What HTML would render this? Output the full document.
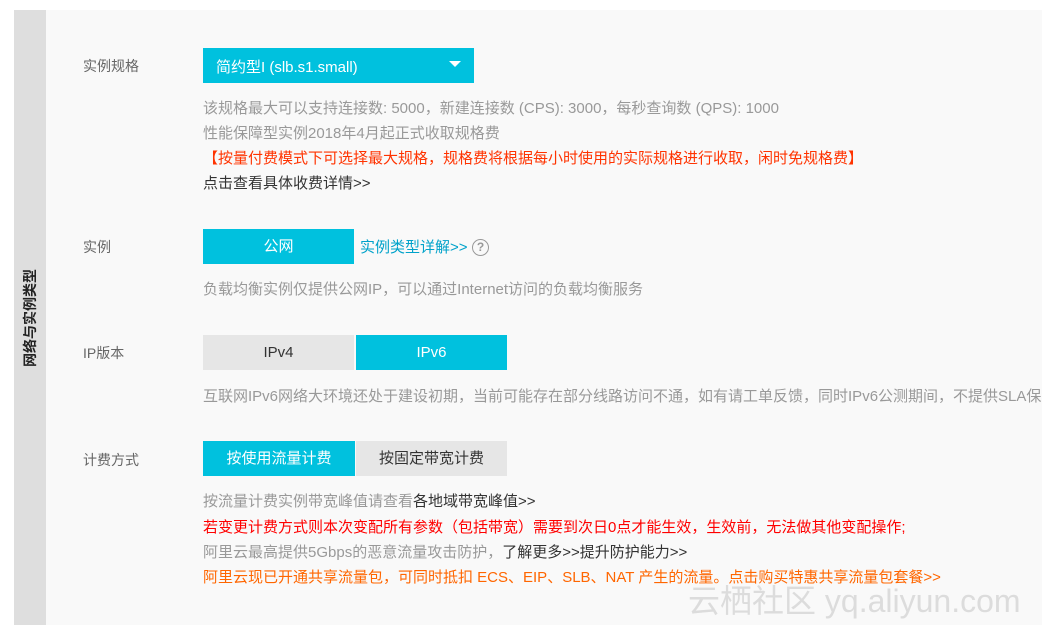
<!DOCTYPE html>
<html><head><meta charset="utf-8"><style>
body{margin:0;width:1042px;height:625px;background:#fff;position:relative;overflow:hidden;font-family:"Liberation Sans","Noto Sans CJK SC",sans-serif;}
.a{position:absolute;white-space:nowrap;}
.side{left:14px;top:10px;width:32px;height:615px;background:#dedede;}
.main{left:46px;top:10px;width:996px;height:615px;background:#f9f9f9;}
.lab{font-size:14px;color:#666;}
.d{font-size:15px;color:#999;}
.r{font-size:15px;color:#f00;}
.o{font-size:15px;color:#f60;}
.k{color:#333;}
.btn{font-size:15px;text-align:center;}
.on{background:#00c1de;color:#fff;}
.off{background:#e6e6e6;color:#333;}
</style></head><body>
<div class="a side"></div>
<div class="a main"></div>
<div class="a" style="left:30px;top:318px;transform:translate(-50%,-50%) rotate(-90deg);font-size:14px;font-weight:bold;color:#222;">网络与实例类型</div>

<div class="a lab" style="left:83px;top:56px;">实例规格</div>
<div class="a on" style="left:203px;top:48px;width:271px;height:35px;"></div>
<div class="a" style="left:216px;top:56px;color:#fff;font-size:15px;">简约型I (slb.s1.small)</div>
<div class="a" style="left:449px;top:61px;width:0;height:0;border-left:6px solid transparent;border-right:6px solid transparent;border-top:6px solid #fff;"></div>
<div class="a d" style="left:203px;top:97px;">该规格最大可以支持连接数: 5000，新建连接数 (CPS): 3000，每秒查询数 (QPS): 1000</div>
<div class="a d" style="left:203px;top:122px;">性能保障型实例2018年4月起正式收取规格费</div>
<div class="a r" style="left:203px;top:147px;color:#f30;">【按量付费模式下可选择最大规格，规格费将根据每小时使用的实际规格进行收取，闲时免规格费】</div>
<div class="a d k" style="left:203px;top:172px;">点击查看具体收费详情&gt;&gt;</div>

<div class="a lab" style="left:83px;top:237px;">实例</div>
<div class="a btn on" style="left:203px;top:229px;width:151px;height:35px;line-height:35px;">公网</div>
<div class="a" style="left:360px;top:236px;font-size:15px;color:#00a2ca;">实例类型详解&gt;&gt;</div>
<div class="a" style="left:472px;top:239px;width:15px;height:15px;border:1.5px solid #999;border-radius:50%;color:#999;font-size:12px;line-height:15px;text-align:center;font-weight:bold;">?</div>
<div class="a d" style="left:203px;top:278px;">负载均衡实例仅提供公网IP，可以通过Internet访问的负载均衡服务</div>

<div class="a lab" style="left:83px;top:343px;">IP版本</div>
<div class="a btn off" style="left:203px;top:335px;width:151px;height:35px;line-height:35px;">IPv4</div>
<div class="a btn on" style="left:356px;top:335px;width:151px;height:35px;line-height:35px;">IPv6</div>
<div class="a d" style="left:203px;top:385px;">互联网IPv6网络大环境还处于建设初期，当前可能存在部分线路访问不通，如有请工单反馈，同时IPv6公测期间，不提供SLA保障</div>

<div class="a lab" style="left:83px;top:450px;">计费方式</div>
<div class="a btn on" style="left:203px;top:441px;width:152px;height:35px;line-height:35px;">按使用流量计费</div>
<div class="a btn off" style="left:356px;top:441px;width:151px;height:35px;line-height:35px;">按固定带宽计费</div>
<div class="a d" style="left:203px;top:490px;">按流量计费实例带宽峰值请查看<span class="k">各地域带宽峰值&gt;&gt;</span></div>
<div class="a r" style="left:203px;top:516px;">若变更计费方式则本次变配所有参数（包括带宽）需要到次日0点才能生效，生效前，无法做其他变配操作;</div>
<div class="a d" style="left:203px;top:541px;">阿里云最高提供5Gbps的恶意流量攻击防护，<span class="k">了解更多&gt;&gt;提升防护能力&gt;&gt;</span></div>
<div class="a o" style="left:203px;top:566px;">阿里云现已开通共享流量包，可同时抵扣 ECS、EIP、SLB、NAT 产生的流量。点击购买特惠共享流量包套餐&gt;&gt;</div>
<div class="a" style="left:688px;top:576px;font-size:32px;color:rgba(200,200,200,0.6);">云栖社区 yq.aliyun.com</div>
</body></html>
